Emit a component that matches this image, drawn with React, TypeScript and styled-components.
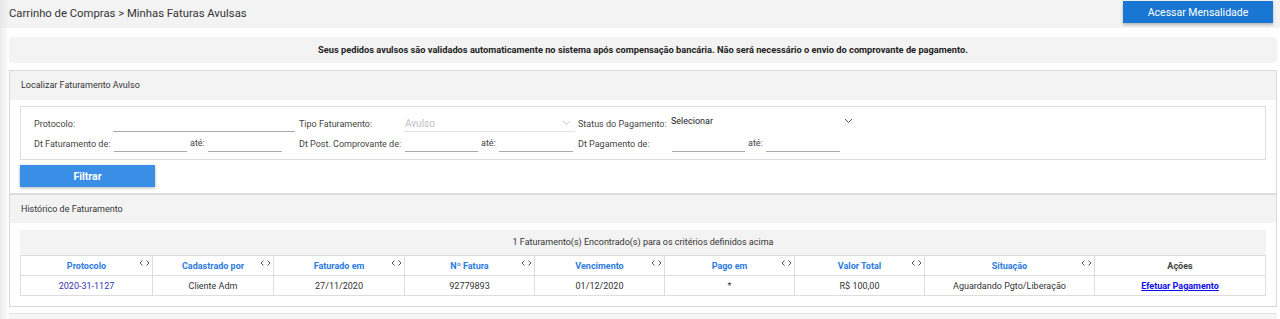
import styled, { createGlobalStyle } from 'styled-components';

const GlobalStyle = createGlobalStyle`
	* {
		box-sizing: border-box;
	}

	body {
		margin: 0;
		background: #fff;
		color: #333;
		font-family: Roboto, 'Liberation Sans', Arial, sans-serif;
	}
`;

const Page = styled.div`
	width: 1280px;
	height: 319px;
	overflow: hidden;
`;

const TopBar = styled.header`
	display: flex;
	justify-content: space-between;
	align-items: flex-start;
	height: 28px;
	padding: 0 7px 0 9px;
	background: linear-gradient(to right, #e7e7e7, #f3f3f3 9px);
`;

const Breadcrumb = styled.div`
	font-size: 11.3px;
	line-height: 27px;
	color: #333;
`;

const AccessButton = styled.button`
	margin-top: 1px;
	width: 150px;
	height: 22px;
	border: none;
	background-color: #1976d2;
	color: #fff;
	font-family: inherit;
	font-size: 10.5px;
	box-shadow: 0 2px 3px rgba(0, 0, 0, 0.25);
	cursor: pointer;
`;

const Content = styled.main`
	padding: 9px 3px 0 9px;
	background: linear-gradient(to right, #ececec, #fff 9px);
`;

const Notice = styled.div`
	height: 26px;
	border-radius: 4px;
	background-color: #f3f3f3;
	font-size: 9.25px;
	font-weight: 700;
	line-height: 25px;
	text-align: center;
	color: #222;
`;

const Panel = styled.section`
	margin-top: 7px;
	border: 1px solid #d9d9d9;
	background: #fff;
`;

const SectionHeader = styled.div<{ $divider?: boolean }>`
	height: ${(p) => (p.$divider ? '30px' : '29px')};
	padding: 0 11px;
	background-color: #f3f3f3;
	border-top: ${(p) => (p.$divider ? '2px solid #dcdcdc' : 'none')};
	font-size: 9px;
	line-height: 29px;
	color: #333;
`;

const SectionBody = styled.div<{ $top: number; $bottom: number }>`
	padding: ${(p) => `${p.$top}px 10px ${p.$bottom}px`};
`;

const FilterBox = styled.div`
	display: grid;
	grid-template-columns: 79px 186px 105px 174px 93px 190px;
	grid-auto-rows: 17px;
	row-gap: 3px;
	padding: 8px 13px 7px;
	border: 1px solid #ddd;
`;

const Label = styled.span`
	display: flex;
	align-items: center;
	font-size: 9px;
	color: #444;
	white-space: nowrap;
`;

const LineInput = styled.div<{ $width: number }>`
	width: ${(p) => p.$width}px;
	height: 17px;
	border-bottom: 1px solid #aaa;
`;

const Range = styled.div`
	display: flex;
	align-items: flex-end;
	gap: 3px;
	padding-left: 1px;

	span {
		width: 15px;
		font-size: 9px;
		color: #444;
		line-height: 16px;
		padding-bottom: 1px;
	}
`;

const Select = styled.div<{ $disabled?: boolean; $width: number }>`
	display: flex;
	justify-content: space-between;
	align-items: ${(p) => (p.$disabled ? 'center' : 'flex-start')};
	width: ${(p) => p.$width}px;
	height: 17px;
	padding: ${(p) => (p.$disabled ? '0 4px 0 1px' : '0 4px 0 0')};
	border-bottom: 1px solid ${(p) => (p.$disabled ? '#e4e4e4' : 'transparent')};
	font-size: ${(p) => (p.$disabled ? '10px' : '9px')};
	line-height: ${(p) => (p.$disabled ? '17px' : '12px')};
	color: ${(p) => (p.$disabled ? '#c2c2c2' : '#222')};

	svg {
		margin-top: ${(p) => (p.$disabled ? '0' : '3px')};
	}
`;

const FilterButton = styled.button`
	display: block;
	margin-top: 5px;
	width: 135px;
	height: 22px;
	border: none;
	background-color: #3a8ee6;
	color: #fff;
	font-family: inherit;
	font-size: 10.5px;
	font-weight: 700;
	box-shadow: 0 1px 3px rgba(0, 0, 0, 0.3);
	cursor: pointer;
`;

const Caption = styled.div`
	height: 25px;
	background-color: #f3f3f3;
	font-size: 9px;
	line-height: 25px;
	text-align: center;
	color: #333;
`;

const Table = styled.table`
	width: 1245px;
	border-collapse: collapse;
	table-layout: fixed;
	font-size: 9px;
`;

const Th = styled.th<{ $plain?: boolean }>`
	position: relative;
	height: 20px;
	padding: 0;
	border: 1px solid #ddd;
	font-weight: 700;
	color: ${(p) => (p.$plain ? '#444' : '#2b7be0')};
	text-align: center;
`;

const SortIcon = styled.svg`
	position: absolute;
	top: 4px;
	right: 2px;
`;

const Td = styled.td<{ $link?: boolean }>`
	height: 20px;
	padding: 0;
	border: 1px solid #ddd;
	text-align: center;
	color: ${(p) => (p.$link ? '#3434b4' : '#333')};
`;

const PayLink = styled.a`
	color: #0d0dee;
	font-weight: 700;
	text-decoration: underline;
	cursor: pointer;
`;

const Footer = styled.footer`
	margin-top: 6px;
	height: 12px;
	border-top: 1px solid #e2e2e2;
	background-color: #f5f5f5;
`;

const Chevron = ({ color }: { color: string }) => (
	<svg width="9" height="6" viewBox="0 0 9 6">
		<path d="M1 1l3.5 3.5L8 1" fill="none" stroke={color} strokeWidth="1" />
	</svg>
);

const Sort = () => (
	<SortIcon width="11" height="6" viewBox="0 0 11 6">
		<path d="M3.5 0.5L1 3l2.5 2.5M7.5 0.5L10 3l-2.5 2.5" fill="none" stroke="#555" strokeWidth="1" />
	</SortIcon>
);

const columns = [
	{ title: 'Protocolo', width: 132 },
	{ title: 'Cadastrado por', width: 121 },
	{ title: 'Faturado em', width: 131 },
	{ title: 'Nº Fatura', width: 130 },
	{ title: 'Vencimento', width: 130 },
	{ title: 'Pago em', width: 130 },
	{ title: 'Valor Total', width: 130 },
	{ title: 'Situação', width: 170 },
	{ title: 'Ações', width: 171, plain: true },
];

export default function App(): JSX.Element {
	return (
		<Page>
			<GlobalStyle />
			<TopBar>
				<Breadcrumb>Carrinho de Compras &gt; Minhas Faturas Avulsas</Breadcrumb>
				<AccessButton>Acessar Mensalidade</AccessButton>
			</TopBar>

			<Content>
				<Notice>
					Seus pedidos avulsos são validados automaticamente no sistema após compensação
					bancária. Não será necessário o envio do comprovante de pagamento.
				</Notice>

				<Panel>
					<SectionHeader>Localizar Faturamento Avulso</SectionHeader>
					<SectionBody $top={6} $bottom={6}>
						<FilterBox>
							<Label>Protocolo:</Label>
							<LineInput $width={182} />
							<Label>Tipo Faturamento:</Label>
							<Select $disabled $width={171}>
								Avulso
								<Chevron color="#c8c8c8" />
							</Select>
							<Label>Status do Pagamento:</Label>
							<Select $width={186}>
								Selecionar
								<Chevron color="#555" />
							</Select>

							<Label>Dt Faturamento de:</Label>
							<Range>
								<LineInput $width={73} />
								<span>até:</span>
								<LineInput $width={74} />
							</Range>
							<Label>Dt Post. Comprovante de:</Label>
							<Range>
								<LineInput $width={73} />
								<span>até:</span>
								<LineInput $width={74} />
							</Range>
							<Label>Dt Pagamento de:</Label>
							<Range>
								<LineInput $width={73} />
								<span>até:</span>
								<LineInput $width={74} />
							</Range>
						</FilterBox>
						<FilterButton>Filtrar</FilterButton>
					</SectionBody>

					<SectionHeader $divider>Histórico de Faturamento</SectionHeader>
					<SectionBody $top={7} $bottom={10}>
						<Caption>1 Faturamento(s) Encontrado(s) para os critérios definidos acima</Caption>
						<Table>
							<colgroup>
								{columns.map((c) => (
									<col key={c.title} style={{ width: c.width }} />
								))}
							</colgroup>
							<thead>
								<tr>
									{columns.map((c) => (
										<Th key={c.title} $plain={c.plain}>
											{c.title}
											{!c.plain && <Sort />}
										</Th>
									))}
								</tr>
							</thead>
							<tbody>
								<tr>
									<Td $link>2020-31-1127</Td>
									<Td>Cliente Adm</Td>
									<Td>27/11/2020</Td>
									<Td>92779893</Td>
									<Td>01/12/2020</Td>
									<Td>*</Td>
									<Td>R$ 100,00</Td>
									<Td>Aguardando Pgto/Liberação</Td>
									<Td>
										<PayLink>Efetuar Pagamento</PayLink>
									</Td>
								</tr>
							</tbody>
						</Table>
					</SectionBody>
				</Panel>
				<Footer />
			</Content>
		</Page>
	);
}
